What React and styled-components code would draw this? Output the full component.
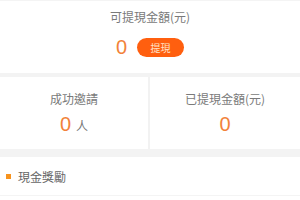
import React from 'react';
import styled, { createGlobalStyle } from 'styled-components';

const GlobalStyle = createGlobalStyle`
  body {
    margin: 0;
    background: #fff;
    font-family: "Noto Sans CJK TC", "Noto Sans", sans-serif;
  }
`;

const Page = styled.div`
  width: 300px;
  background: #fff;
  border-top: 1px solid #f4f4f4;
`;

const Balance = styled.div`
  display: flex;
  flex-direction: column;
  align-items: center;
  padding-top: 8px;
  height: 64px;
`;

const Label = styled.div`
  font-size: 12px;
  line-height: 16px;
  color: #7a7a7a;
`;

const AmountRow = styled.div`
  display: flex;
  align-items: center;
  gap: 10px;
  margin-top: 12px;
`;

const BigAmount = styled.span`
  font-family: "Liberation Sans", sans-serif;
  font-size: 20px;
  line-height: 20px;
  color: #f2823a;
`;

const WithdrawButton = styled.button`
  width: 47px;
  height: 19px;
  border: none;
  border-radius: 10px;
  background: #ff5f0f;
  color: #ffe3c8;
  font-family: inherit;
  font-size: 10px;
  line-height: 19px;
  padding: 0;
`;

const Band = styled.div`
  height: ${(p) => p.h}px;
  background: #f3f3f3;
`;

const Stats = styled.div`
  display: grid;
  grid-template-columns: 148px 1fr;
  height: 72px;
`;

const StatCell = styled.div`
  display: flex;
  flex-direction: column;
  align-items: center;
  padding-top: 14px;
  border-left: ${(p) => (p.divided ? '2px solid #f2f2f2' : 'none')};
`;

const StatValue = styled.div`
  display: flex;
  align-items: baseline;
  gap: 5px;
  margin-top: 7px;
`;

const Unit = styled.span`
  font-size: 12px;
  color: #777;
`;

const SectionRow = styled.div`
  display: flex;
  align-items: center;
  gap: 7px;
  height: 38px;
  padding-left: 6px;
  border-bottom: 1px solid #f4f4f4;
`;

const Dot = styled.span`
  width: 5px;
  height: 5px;
  background: #f7931e;
`;

const SectionTitle = styled.span`
  font-size: 12px;
  color: #666;
`;

export default function App() {
  return (
    <>
      <GlobalStyle />
      <Page>
        <Balance>
          <Label>可提現金額(元)</Label>
          <AmountRow>
            <BigAmount>0</BigAmount>
            <WithdrawButton>提現</WithdrawButton>
          </AmountRow>
        </Balance>
        <Band h={4} />
        <Stats>
          <StatCell>
            <Label>成功邀請</Label>
            <StatValue>
              <BigAmount>0</BigAmount>
              <Unit>人</Unit>
            </StatValue>
          </StatCell>
          <StatCell divided>
            <Label>已提現金額(元)</Label>
            <StatValue>
              <BigAmount>0</BigAmount>
            </StatValue>
          </StatCell>
        </Stats>
        <Band h={8} />
        <SectionRow>
          <Dot />
          <SectionTitle>現金獎勵</SectionTitle>
        </SectionRow>
      </Page>
    </>
  );
}
